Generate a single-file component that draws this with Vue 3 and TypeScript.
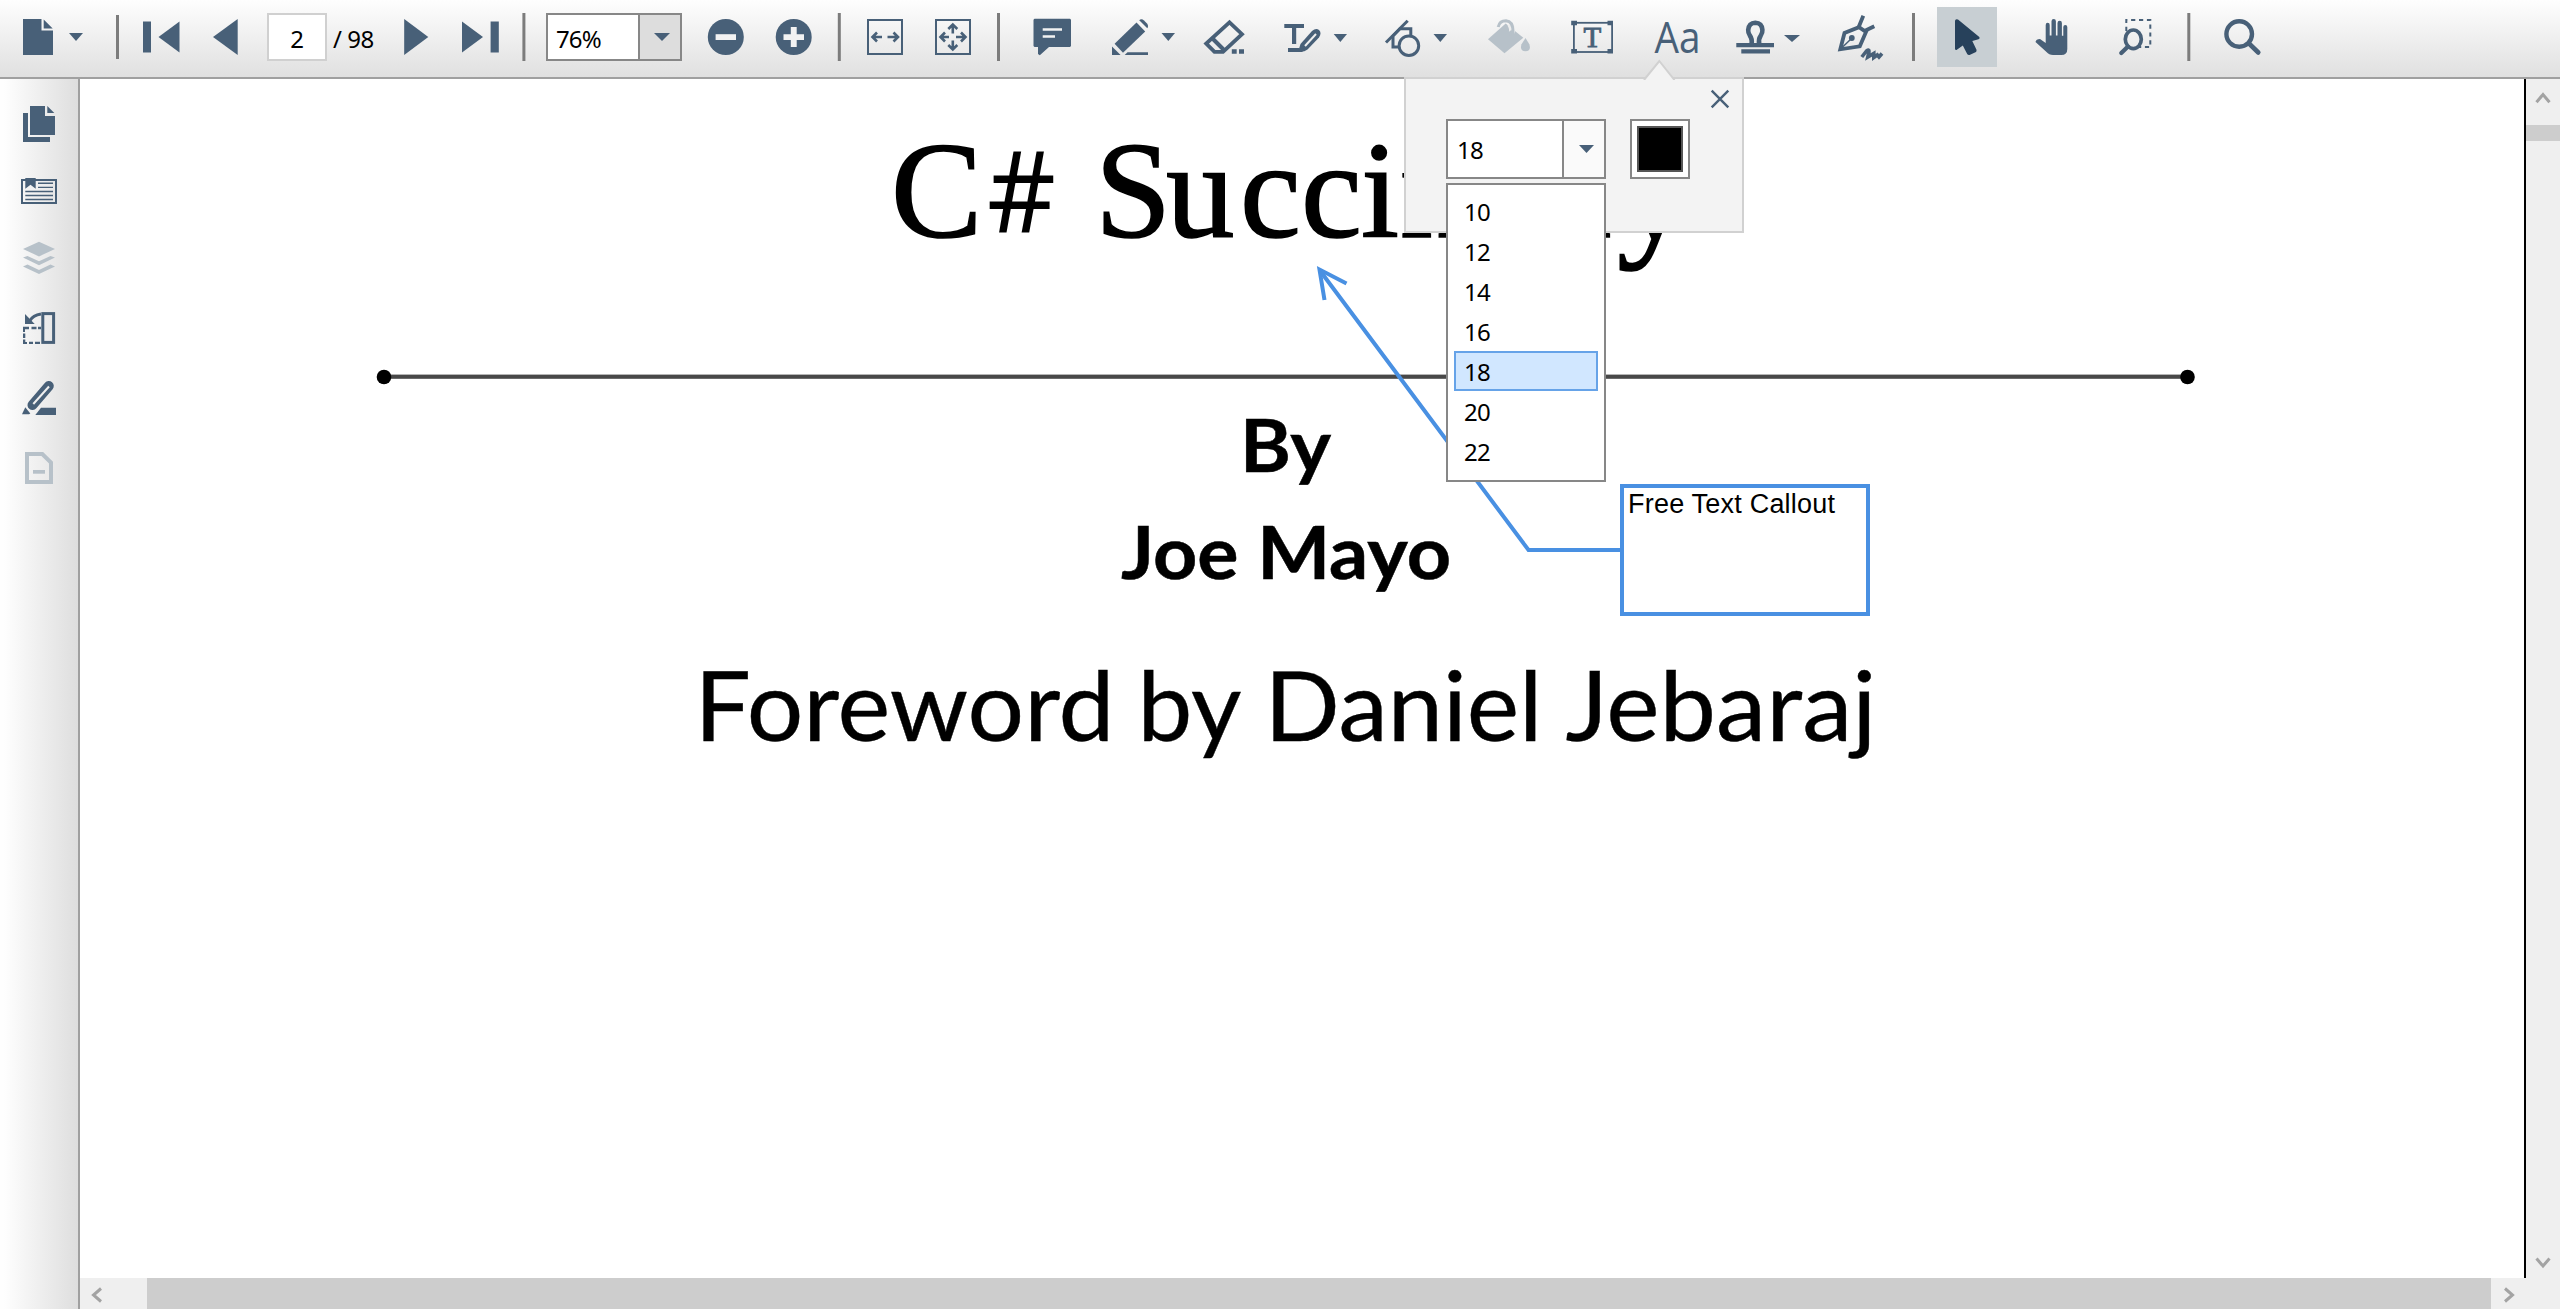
<script setup lang="ts">
import { ref } from 'vue'

const page = ref('2')
const pageCount = 98
const zoom = ref('76%')
const sizes = [10, 12, 14, 16, 18, 20, 22]
const selectedSize = ref(18)
</script>

<template>
  <div class="viewer">
    <header class="toolbar">
      <svg class="icon" width="96" height="77" viewBox="0 0 96 77">
        <path d="M23 19H41.5V30.5H53V55H23Z" /><path d="M43.7 19.5L52.7 28.5H43.7Z" />
        <path d="M69 33H83L76 41Z" />
      </svg>
      <svg class="icon" width="171" height="77" viewBox="96 0 171 77">
        <rect class="sep" x="116" y="15" width="3" height="44" />
        <rect x="143" y="21.5" width="8" height="31" />
        <path d="M158.5 37L179.5 21.5V52.5Z" /><path d="M213 37L237.7 19V55Z" />
      </svg>
      <div class="page-box">{{ page }}</div>
      <div class="page-count">/ {{ pageCount }}</div>
      <svg class="icon" width="159" height="77" viewBox="387 0 159 77">
        <path d="M428.3 37L404.2 19V55Z" /><path d="M483 37L462 21.5V52.5Z" />
        <rect x="490.6" y="21.5" width="8.2" height="31" />
        <rect class="sep" x="522.4" y="13" width="3" height="48" />
      </svg>
      <div class="zoom-box">
        <span class="zoom-value">{{ zoom }}</span>
        <span class="zoom-drop">
          <svg class="icon" width="42" height="44" viewBox="640 15 42 44"><path d="M654 33H670L662 41Z" /></svg>
        </span>
      </div>
      <svg class="icon" width="338" height="77" viewBox="682 0 338 77">
        <circle cx="725.8" cy="37" r="18" /><rect class="paper" x="715.6" y="34.2" width="20.4" height="5.8" />
        <circle cx="793.7" cy="37" r="18" />
        <path class="paper" d="M783.5 34.2H790.8V27H796.7V34.2H804V40H796.7V47H790.8V40H783.5Z" />
        <rect class="sep" x="837.8" y="13" width="3" height="48" />
        <g class="line w2">
          <rect x="868" y="20" width="34" height="34" />
          <rect x="936" y="20" width="34" height="34" />
        </g>
        <g class="line w25">
          <path d="M882 37H872.5M877 32.5L872.5 37L877 41.5M887.5 37H898M893.5 32.5L898 37L893.5 41.5" />
          <path d="M949 37H940.5M945 32.5L940.5 37L945 41.5M956 37H965.5M961 32.5L965.5 37L961 41.5M952.8 33.5V24.5M948.3 29L952.8 24.5L957.3 29M952.8 40.5V49.5M948.3 45L952.8 49.5L957.3 45" />
        </g>
        <rect class="sep" x="997" y="13" width="3" height="48" />
      </svg>
      <svg class="icon" width="168" height="77" viewBox="1020 0 168 77">
        <path d="M1034.5 18.7H1070L1071 19.7V46L1070 47H1049L1039.8 55.2L1038 54V47H1034.5L1033.5 46V19.7Z" />
        <path class="paper" d="M1042.7 28.2H1062V30.8H1042.7ZM1042.7 35.3H1055V37.8H1042.7Z" />
        <path d="M1136.5 22.4L1145.2 31.5L1123 52.8L1114.6 43.7Z" />
        <path d="M1139.2 20.2Q1141.5 18.4 1144 20.5L1147 23.5Q1149 26 1147.3 28.2Z" />
        <path d="M1112 46.5L1120.6 55H1112Z" /><path d="M1124.7 55L1127.5 52.2H1148V55Z" />
        <path d="M1161.5 33H1175L1168.3 41Z" />
      </svg>
      <svg class="icon" width="274" height="77" viewBox="1188 0 274 77">
        <g class="line">
          <path stroke-width="3.8" d="M1229.5 22.3L1242 34.2L1223 51.8H1214.5L1206.2 43.5Z" />
          <path stroke-width="4" d="M1211.5 37.5L1225 51" />
        </g>
        <path d="M1231.8 49.2H1236.7V53.8H1231.8ZM1239 49.2H1244V53.8H1239Z" />
        <path d="M1284.3 24H1304V28H1296.2V44H1292V28H1284.3Z" />
        <path d="M1288 48H1299L1303 52H1288Z" />
        <path d="M1298.5 50.5L1300.5 44L1312 31Q1316 27.5 1319 30Q1322 33 1319 37.5L1307.5 49.5Q1304.5 52 1300 51.8Z" />
        <path class="paperline" stroke-width="2" d="M1305 46L1316 34" />
        <path d="M1333.7 34H1347L1340.3 42Z" />
        <g class="line w3">
          <path d="M1407.7 20.8L1386 42.5" /><path d="M1399 47H1393V36L1400 28.7H1410.8V35.5" />
          <circle cx="1408.9" cy="45.7" r="9.8" />
        </g>
        <path d="M1433.5 34H1447L1440.3 42Z" />
      </svg>
      <svg class="icon" width="260" height="77" viewBox="1462 0 260 77">
        <g class="faded">
          <path d="M1488 39.3L1505.7 23.5L1523.3 37.7L1504.5 53.2Z" />
          <path class="line halo" d="M1510 24Q1513 29 1511.7 32.5" />
          <path class="line" stroke-width="3" d="M1498.2 27Q1499.5 20.7 1506 20.7Q1513 21.2 1513 31.5" />
          <circle cx="1511.8" cy="33" r="2.7" />
          <path d="M1525.5 38L1529.3 44.3Q1531.5 51 1525.5 51.2Q1519.5 51 1521.5 44.3Z" />
        </g>
        <rect class="line" stroke-width="1.8" x="1573.9" y="22.8" width="38.2" height="29.2" />
        <path d="M1571.2 20.7H1577V25.3H1571.2ZM1607.5 20.7H1613V25.3H1607.5ZM1571.2 49H1577V53.5H1571.2ZM1607.5 49H1613V53.5H1607.5Z" />
        <text class="serif-t" x="1592.4" y="46.6" text-anchor="middle">T</text>
        <text class="aa" x="1654.5" y="52.5" textLength="46" lengthAdjust="spacingAndGlyphs">Aa</text>
      </svg>
      <svg class="icon" width="215" height="77" viewBox="1722 0 215 77">
        <path class="line" stroke-width="4.6" d="M1751.5 44.5Q1752.5 39 1749.8 35.5Q1748 33 1748.2 30Q1748.8 23 1755.3 22.8Q1762 23 1762.4 30Q1762.6 33 1760.8 35.5Q1758.2 39 1759.2 44.5" />
        <path d="M1736.3 43H1774V47.3H1736.3ZM1741.3 49.3H1770V53.4H1741.3Z" />
        <path d="M1784 35H1800L1792 42Z" />
        <g class="line">
          <path stroke-width="3.8" d="M1840.3 49.3L1844.5 33L1859 27.2L1866 32L1859.8 46.3Z" />
          <path stroke-width="3.8" d="M1858.5 27.5L1863.3 15.8M1864.5 31L1874.3 26.3" />
          <path stroke-width="1.5" d="M1840.5 49L1851 39" />
          <path stroke-width="3.6" d="M1861.8 57L1866.5 51Q1869.5 48.8 1869 52L1867.8 57L1873.8 53.5L1873.8 57.5L1877.3 55L1879 57L1882 53.5" />
        </g>
        <circle cx="1851.8" cy="38" r="2.9" />
        <rect class="sep" x="1912" y="13" width="3" height="48" />
      </svg>
      <div class="tool-active">
        <svg width="60" height="60" viewBox="1937 7 60 60">
          <path d="M1955 21Q1955.2 18.4 1958 19.5L1979.3 37Q1980.5 38.6 1978.5 39.2L1972.3 41L1976.5 49.8Q1977 51.4 1975.5 52.2L1969.5 55Q1968 55.3 1967.2 54L1962.8 45.5L1956.5 50Q1955 50.3 1955 48.5Z" />
        </svg>
      </div>
      <svg class="icon" width="563" height="77" viewBox="1997 0 563 77">
        <path d="M2045.7 25q0-2.3 2-2.3t2 2.3v10.5h1.8V21.2q0-2.3 2.2-2.3t2.2 2.3v14.3h1.6V23q0-2.3 2.2-2.3t2.2 2.3v12.8h1.4V27q0-2 2-2t2 2V49q0 6-6 6H2053q-4 0-6.5-3L2035.5 42Q2036 39 2040 39L2045.7 43Z" />
        <path class="line w2" stroke-dasharray="4.2 3.7" d="M2126.3 31V20H2150.3V47H2138" />
        <g class="line">
          <ellipse stroke-width="3.7" cx="2133.3" cy="39.3" rx="8" ry="9.3" />
          <path stroke-width="4.3" stroke-linecap="round" d="M2128 46.5L2121.3 53" />
          <circle stroke-width="4.4" cx="2239.2" cy="34" r="12.8" />
          <path stroke-width="4.6" stroke-linecap="round" d="M2249 43.5L2258.3 52.5" />
        </g>
        <rect class="sep" x="2187.3" y="13" width="3" height="48" />
      </svg>
    </header>

    <div class="body">
      <aside class="sidebar">
        <svg class="icon" width="78" height="430" viewBox="0 79 78 430">
          <path d="M23 113H28V137H50V142H23Z" /><path d="M30 106H45V116H55V135H30Z" /><path d="M47.3 106L54.3 113H47.3Z" />
          <rect class="line w2" x="22" y="180" width="34" height="23" />
          <path d="M25.3 178H35.7V188.7L30.5 184.7L25.3 188.7Z" />
          <path class="line" stroke-width="1.4" d="M38 183.3H53M38 187.4H53M25.3 191.5H53M25.3 195.5H53M25.3 199.5H53" />
          <g class="faded">
            <path d="M23 249L39 241.7L55 249L39 256.4Z" />
            <path d="M23 257.6L27.5 256L39 261.2L50.5 256L55 257.6L39 265.2Z" />
            <path d="M23 266.4L27.5 264.6L39 270L50.5 264.6L55 266.4L39 274Z" />
          </g>
          <rect class="line" stroke-width="3" x="42.8" y="313.6" width="10.8" height="28.8" />
          <path d="M23 326.8H29V329.2H25V332H23ZM31.5 326.8H36.5V329.2H31.5ZM38 326.8H41V329.2H38ZM23 333.5H25.3V338H23ZM23 339.5H25.3V342H27V344H23ZM29 341.7H33V344H29ZM35 341.7H40V344H35Z" />
          <path d="M25 314L34.7 324H25Z" /><path class="line w3" d="M30 320.5Q33 315.3 41 314" />
          <path class="line" stroke-width="10" stroke-linecap="round" d="M48.8 386L32.5 405" />
          <path class="paperline" stroke-width="2" d="M49 386.5L33.3 404" />
          <path d="M22 414.3L25.3 407.3L30.3 413.5L29 414.3Z" /><path d="M35.3 415L41 407.8H56V415Z" />
          <g class="faded">
            <path class="line" stroke-width="4" d="M27 454H42.3L51 462.7V482H27Z" /><rect x="33" y="470" width="12" height="3.7" />
          </g>
        </svg>
      </aside>

      <div class="main">
        <div class="document">
          <!-- Document canvas: rendered page text plus the callout annotation -->
          <svg width="2444" height="1199" viewBox="80 79 2444 1199">
            <g class="title">
              <text x="891" y="237">C</text>
              <text class="hash" x="987" y="233" textLength="69" lengthAdjust="spacingAndGlyphs">#</text>
              <text x="1095 1166 1240 1301 1361 1400 1474 1535 1574" y="237">Succinctl<tspan class="tail" x="1617" y="239">y</tspan></text>
            </g>
            <rect x="384" y="374.6" width="1804" height="4.2" fill="#484848" />
            <circle cx="384" cy="377" r="7.3" /><circle cx="2187.5" cy="377" r="7.3" />
            <text class="author" x="1240" y="471.5" textLength="91" lengthAdjust="spacingAndGlyphs">By</text>
            <text class="author" x="1121" y="578.5" textLength="330" lengthAdjust="spacingAndGlyphs">Joe Mayo</text>
            <g class="foreword">
              <text x="694.5" y="741.3" textLength="420" lengthAdjust="spacingAndGlyphs">Foreword</text>
              <text x="1137.5" y="741.3" textLength="104" lengthAdjust="spacingAndGlyphs">by</text>
              <text x="1264.5" y="741.3" textLength="278" lengthAdjust="spacingAndGlyphs">Daniel</text>
              <text x="1565.5" y="741.3" textLength="311" lengthAdjust="spacingAndGlyphs">Jebaraj</text>
            </g>
            <g class="callout">
              <path d="M1319.5 270L1528.5 550H1622" /><path d="M1346.5 283.5L1319.5 269.5L1324.5 300" />
              <rect x="1622" y="486" width="246" height="128" fill="#fff" />
            </g>
            <text class="callout-text" x="1628" y="513.3" textLength="207">Free Text Callout</text>
          </svg>
        </div>
        <div class="hscroll">
          <svg width="67" height="31" viewBox="80 1278 67 31"><path d="M101 1288.5L93.5 1295L101 1301.5" /></svg>
          <div class="hthumb"></div>
          <svg width="33" height="31" viewBox="2492 1278 33 31"><path d="M2506 1288.5L2513.5 1295L2506 1301.5" /></svg>
        </div>
      </div>

      <div class="vscroll-column">
        <div class="vscroll">
          <svg width="34" height="46" viewBox="2526 79 34 46"><path d="M2536.5 102.3L2543 94.5L2549.5 102.3" /></svg>
          <div class="vthumb"></div>
          <svg class="down" width="34" height="33" viewBox="2526 1245 34 33"><path d="M2536.5 1258.5L2543 1266L2549.5 1258.5" /></svg>
        </div>
      </div>
    </div>

    <div class="popup">
      <svg class="pointer" width="34" height="21" viewBox="1642 59 34 21">
        <path d="M1644 80L1659.3 61L1674.5 80" />
      </svg>
      <svg class="close" width="20" height="20" viewBox="0 0 20 20"><path d="M1.7 1.7L18.3 18.3M18.3 1.7L1.7 18.3" /></svg>
      <div class="controls">
        <div class="combo">
          <span class="combo-value">{{ selectedSize }}</span>
          <span class="combo-drop"><svg class="icon" width="16" height="8" viewBox="0 0 16 8"><path d="M0 0H15L7.5 8Z" /></svg></span>
        </div>
        <div class="swatch"><div class="swatch-color"></div></div>
      </div>
      <ul class="size-list">
        <li v-for="s in sizes" :key="s" :class="{ selected: s === selectedSize }" @click="selectedSize = s">{{ s }}</li>
      </ul>
    </div>
  </div>
</template>

<style>
body { margin: 0; overflow: hidden; }
</style>

<style scoped>
.viewer {
  position: relative;
  display: flex;
  flex-direction: column;
  width: 2560px;
  height: 1309px;
  overflow: hidden;
  background: #fff;
  color: #000;
  font: 24px/32px "Noto Sans", "Open Sans", sans-serif;
}
svg { display: block; flex: none; }
.toolbar {
  display: flex;
  box-sizing: border-box;
  height: 79px;
  flex: none;
  background: linear-gradient(#fefefe, #e0e0e0);
  border-bottom: 2px solid #a0a0a0;
}
.icon { fill: #486078; stroke: none; }
.sep { fill: #7c7c7c; }
.paper { fill: #f2f2f2; }
.paperline { fill: none; stroke: #efefef; }
.line { fill: none; stroke: #486078; }
.w2 { stroke-width: 2; }
.w25 { stroke-width: 2.6; }
.w3 { stroke-width: 3; }
.faded { fill: #b7c1c9; }
.faded .line { stroke: #b7c1c9; }
.faded .halo { stroke: #ededed; stroke-width: 6; }
.serif-t { font: 29px "Liberation Serif", serif; stroke: #486078; stroke-width: 0.9; }
.aa { font: 43px "Open Sans", sans-serif; }
.page-box {
  box-sizing: border-box;
  width: 60px;
  height: 48px;
  margin-top: 13px;
  border: 2px solid #d0d0d0;
  background: #fff;
  text-align: center;
  line-height: 47px;
}
.page-count {
  width: 54px;
  padding-left: 6px;
  margin-top: 15px;
  line-height: 47px;
  letter-spacing: -0.5px;
  white-space: nowrap;
}
.zoom-box {
  display: flex;
  box-sizing: border-box;
  width: 136px;
  height: 48px;
  margin-top: 13px;
  border: 2px solid #878787;
  background: #fff;
}
.zoom-value {
  width: 82px;
  padding-left: 8px;
  line-height: 47px;
  letter-spacing: -0.9px;
}
.zoom-drop { width: 40px; border-left: 2px solid #878787; background: #ddd; overflow: hidden; }
.tool-active { width: 60px; height: 60px; margin-top: 7px; background: #c8cfd3; }
.tool-active svg { fill: #27415b; }
.body { display: flex; flex: 1; min-height: 0; }
.sidebar {
  width: 78px;
  border-right: 2px solid #a0a0a0;
  background: linear-gradient(90deg, #fefefe 4px, #dedede);
}
.main { display: flex; flex-direction: column; width: 2444px; }
.document { height: 1199px; }
.title { font: 137px "Liberation Serif", serif; stroke: #000; stroke-width: 1.6; }
.title .hash { font: 113px "Noto Sans", sans-serif; stroke: none; }
.title .tail { font-size: 150px; }
.author { font: bold 73px Lato, sans-serif; stroke: #000; stroke-width: 0.5; }
.foreword { font: 96px Lato, sans-serif; stroke: #000; stroke-width: 0.4; }
.callout { fill: none; stroke: #4990e2; stroke-width: 4; }
.callout-text { font: 27px "Liberation Sans", sans-serif; }
.hscroll { display: flex; height: 31px; background: #efefef; }
.hthumb { width: 2345px; background: #cdcdcd; }
.hscroll path, .vscroll path { fill: none; stroke: #a3a3a3; stroke-width: 3; }
.vscroll-column { width: 36px; background: #efefef; }
.vscroll {
  display: flex;
  flex-direction: column;
  height: 1199px;
  border-left: 2px solid #000;
}
.vthumb { height: 16px; background: #cdcdcd; }
.down { margin-top: auto; }
.popup {
  position: absolute;
  left: 1404px;
  top: 77px;
  box-sizing: border-box;
  width: 340px;
  height: 156px;
  border: 2px solid #d1d1d1;
  background: #f3f3f3;
}
.pointer { position: absolute; left: 236px; top: -20px; fill: #f3f3f3; stroke: #d1d1d1; stroke-width: 2; }
.close { position: absolute; left: 304px; top: 10px; stroke: #486078; stroke-width: 2.4; }
.controls { display: flex; gap: 24px; padding: 40px 0 0 40px; }
.combo, .swatch { display: flex; box-sizing: border-box; height: 60px; border: 2px solid #878787; background: #fff; }
.combo { width: 160px; }
.combo-value { width: 105px; padding-left: 9px; line-height: 58px; letter-spacing: -0.8px; }
.combo-drop { display: flex; flex: 1; padding: 24px 0 0 15px; border-left: 2px solid #878787; background: #fafafa; }
.swatch { width: 60px; padding: 5px; }
.swatch-color { flex: 1; border: 2px solid #555; background: #000; }
.size-list {
  position: absolute;
  left: 40px;
  top: 104px;
  box-sizing: border-box;
  width: 160px;
  height: 299px;
  margin: 0;
  padding: 6px;
  list-style: none;
  border: 2px solid #878787;
  background: #fff;
}
.size-list li {
  box-sizing: border-box;
  height: 40px;
  padding-left: 8px;
  border: 2px solid transparent;
  line-height: 38px;
  letter-spacing: -0.8px;
}
.size-list .selected { border-color: #66a3e8; background: #d1e7ff; }
</style>
